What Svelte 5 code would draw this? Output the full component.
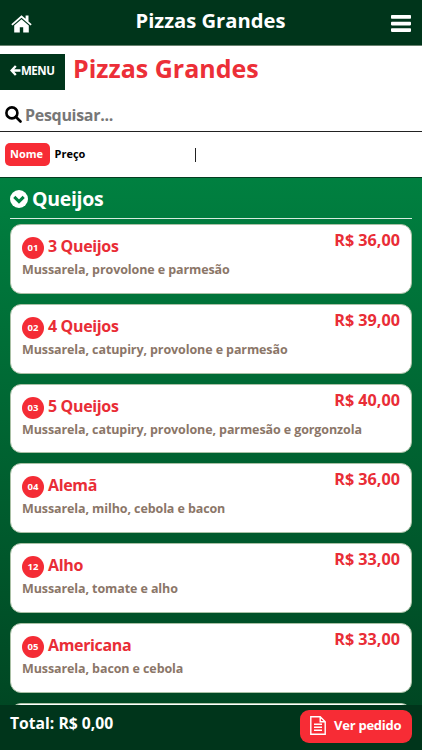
<script>
  const title = "Pizzas Grandes";
  const pizzas = [
    { code: "01", name: "3 Queijos", price: "36,00", info: "Mussarela, provolone e parmesão" },
    { code: "02", name: "4 Queijos", price: "39,00", info: "Mussarela, catupiry, provolone e parmesão" },
    { code: "03", name: "5 Queijos", price: "40,00", info: "Mussarela, catupiry, provolone, parmesão e gorgonzola" },
    { code: "04", name: "Alemã", price: "36,00", info: "Mussarela, milho, cebola e bacon" },
    { code: "12", name: "Alho", price: "33,00", info: "Mussarela, tomate e alho" },
    { code: "05", name: "Americana", price: "33,00", info: "Mussarela, bacon e cebola" },
  ];

  let sortBy = $state("Nome");
  let open = $state(true);
</script>

<div class="screen">
  <header>
    <svg class="home" viewBox="0 0 21 18">
      <path d="M10.5 0.3L0.3 9.2l1.2 1.4 9-7.8 9 7.8 1.2-1.4-3.2-2.8V0.6h-2.9v3.2z" />
      <path d="M10.5 4.2L3.2 10.4V17.4h5.6v-5.2h3.4v5.2h5.6v-7z" />
    </svg>
    <h1>{title}</h1>
    <svg class="bars" viewBox="0 0 20 18">
      <rect width="20" height="3.6" rx="0.8" y="0.1" />
      <rect width="20" height="3.6" rx="0.8" y="6.8" />
      <rect width="20" height="3.6" rx="0.8" y="13.3" />
    </svg>
  </header>

  <section class="heading">
    <button class="back">
      <svg viewBox="0 0 11 11">
        <path d="M5.8 1L1.6 5.5l4.2 4.5M1.8 5.5H10.5" />
      </svg>
      <span>MENU</span>
    </button>
    <h2>{title}</h2>
  </section>

  <section class="search">
    <svg viewBox="0 0 17 17">
      <circle cx="6.9" cy="6.9" r="5.5" />
      <path d="M11 11l4.5 4.5" />
    </svg>
    <input type="text" placeholder="Pesquisar..." />
  </section>

  <section class="sort">
    {#each ["Nome", "Preço"] as option}
      <button class:selected={sortBy === option} onclick={() => (sortBy = option)}>{option}</button>
    {/each}
    <i></i>
  </section>

  <main>
    <button class="group" onclick={() => (open = !open)}>
      <svg viewBox="0 0 18 18">
        <circle cx="9" cy="9" r="9" />
        <path d="M4.3 6.9L9 11.6l4.7-4.7" />
      </svg>
      <span>Queijos</span>
    </button>
    {#if open}
      <ul>
        {#each pizzas as pizza}
          <li>
            <div class="name">
              <b>{pizza.code}</b>
              <h3>{pizza.name}</h3>
              <strong>R$ {pizza.price}</strong>
            </div>
            <p>{pizza.info}</p>
          </li>
        {/each}
        <li></li>
      </ul>
    {/if}
  </main>

  <footer>
    <span>Total: R$ 0,00</span>
    <button>
      <svg viewBox="0 0 16 19">
        <path d="M0.8 0.8h9.4l5 5v12.4H0.8zM10.2 0.8v5h5M4 8.2h8M4 11.2h8M4 14.2h8" />
      </svg>
      <em>Ver pedido</em>
    </button>
  </footer>
</div>

<style>
  :global(body) {
    margin: 0;
    overflow: hidden;
  }

  .screen {
    display: flex;
    flex-direction: column;
    height: 750px;
    overflow: hidden;
    background: white;
    font-family: "Open Sans", "Noto Sans", sans-serif;
    font-stretch: 90%;
    font-weight: 700;
  }

  h1,
  h2,
  h3,
  p,
  ul {
    margin: 0;
    padding: 0;
    font-weight: 700;
    white-space: nowrap;
  }

  button {
    border: none;
    padding: 0;
    background: none;
    color: inherit;
    font: inherit;
    white-space: nowrap;
  }

  svg {
    flex: none;
    fill: none;
    stroke: none;
  }

  header {
    box-sizing: border-box;
    flex: none;
    display: flex;
    justify-content: space-between;
    height: 46px;
    padding: 0 11px;
    border-bottom: 1px solid #68816f;
    background: #00351b;
    color: white;
  }

  header svg {
    fill: white;
    margin-top: 15px;
  }

  .home {
    width: 21px;
    height: 18px;
  }

  .bars {
    width: 20px;
    height: 18px;
  }

  h1 {
    font-size: 20.2px;
    line-height: 41px;
    margin-right: 2px;
  }

  .heading {
    flex: none;
    display: flex;
    height: 52px;
  }

  .back {
    display: flex;
    align-items: center;
    box-sizing: border-box;
    width: 65px;
    height: 36px;
    margin-top: 8px;
    padding: 0 0 3px 10px;
    background: #00351b;
    color: white;
    font-size: 11.5px;
    letter-spacing: -0.5px;
  }

  .back svg {
    width: 11px;
    height: 11px;
    stroke: white;
    stroke-width: 2.3;
  }

  h2 {
    margin-left: 8px;
    color: #ec2f38;
    font-size: 25px;
    line-height: 45px;
  }

  .search {
    box-sizing: border-box;
    flex: none;
    display: flex;
    height: 34px;
    padding-left: 5px;
    border-bottom: 1px solid #222;
  }

  .search svg {
    width: 17px;
    height: 17px;
    margin-top: 8px;
    stroke: black;
    stroke-width: 2.6;
    stroke-linecap: round;
  }

  input {
    flex: 1;
    min-width: 0;
    height: 33px;
    padding: 0 0 1px 3px;
    border: none;
    outline: none;
    background: none;
    font: inherit;
    font-size: 16px;
    letter-spacing: -0.3px;
  }

  input::placeholder {
    color: #777;
  }

  .sort {
    box-sizing: border-box;
    flex: none;
    display: flex;
    align-items: center;
    height: 46px;
    padding-left: 5px;
    border-bottom: 1px solid #043d20;
    font-size: 11px;
  }

  .sort button {
    width: 40px;
    height: 23px;
    padding-bottom: 2px;
    border-radius: 5px;
  }

  .sort .selected {
    width: 45px;
    padding-right: 2px;
    background: #f72c35;
    color: white;
  }

  .sort i {
    width: 1px;
    height: 14px;
    margin-left: 105px;
    background: #222;
  }

  main {
    flex: 1;
    min-height: 0;
    overflow: hidden;
    padding: 0 10px;
    background: linear-gradient(#008040, #004723);
  }

  .group {
    display: flex;
    box-sizing: border-box;
    width: 100%;
    height: 41px;
    border-bottom: 1px solid #d6eadf;
    color: white;
    font-size: 19.5px;
    line-height: 42px;
    letter-spacing: -0.3px;
  }

  .group svg {
    width: 18px;
    height: 18px;
    margin: 12px 4px 0 0;
    fill: white;
  }

  .group path {
    fill: none;
    stroke: #008040;
    stroke-width: 3;
  }

  ul {
    display: grid;
    gap: 10px;
    padding-top: 5px;
    list-style: none;
  }

  li {
    box-sizing: border-box;
    height: 69.8px;
    padding: 6px 11px;
    border: 1px solid #a9c0a5;
    border-radius: 11px;
    background: white;
  }

  .name {
    display: flex;
    height: 27px;
    color: #e92d36;
  }

  b {
    width: 22px;
    height: 22px;
    margin: 6px 4px 0 0;
    border-radius: 50%;
    background: #f42c35;
    color: white;
    font-size: 9.5px;
    font-weight: 700;
    line-height: 22px;
    text-align: center;
  }

  h3 {
    flex: 1;
    font-size: 16px;
    line-height: 30px;
    letter-spacing: -0.35px;
  }

  strong {
    font-size: 16.2px;
    font-weight: 700;
    line-height: 19px;
  }

  p {
    color: #8b7668;
    font-size: 12.5px;
    line-height: 24px;
    letter-spacing: -0.1px;
  }

  footer {
    box-sizing: border-box;
    flex: none;
    display: flex;
    justify-content: space-between;
    height: 45px;
    padding: 5px 10px;
    background: #00351b;
    color: white;
    font-size: 15.7px;
    line-height: 27px;
  }

  footer button {
    display: flex;
    align-items: center;
    box-sizing: border-box;
    width: 112px;
    height: 33px;
    padding: 0 0 2px 10px;
    border-radius: 9px;
    background: #f72c35;
    font-size: 13px;
    letter-spacing: -0.25px;
  }

  footer svg {
    width: 16px;
    height: 19px;
    margin-right: 8px;
    stroke: white;
    stroke-width: 1.4;
  }

  em {
    font-style: normal;
  }
</style>
